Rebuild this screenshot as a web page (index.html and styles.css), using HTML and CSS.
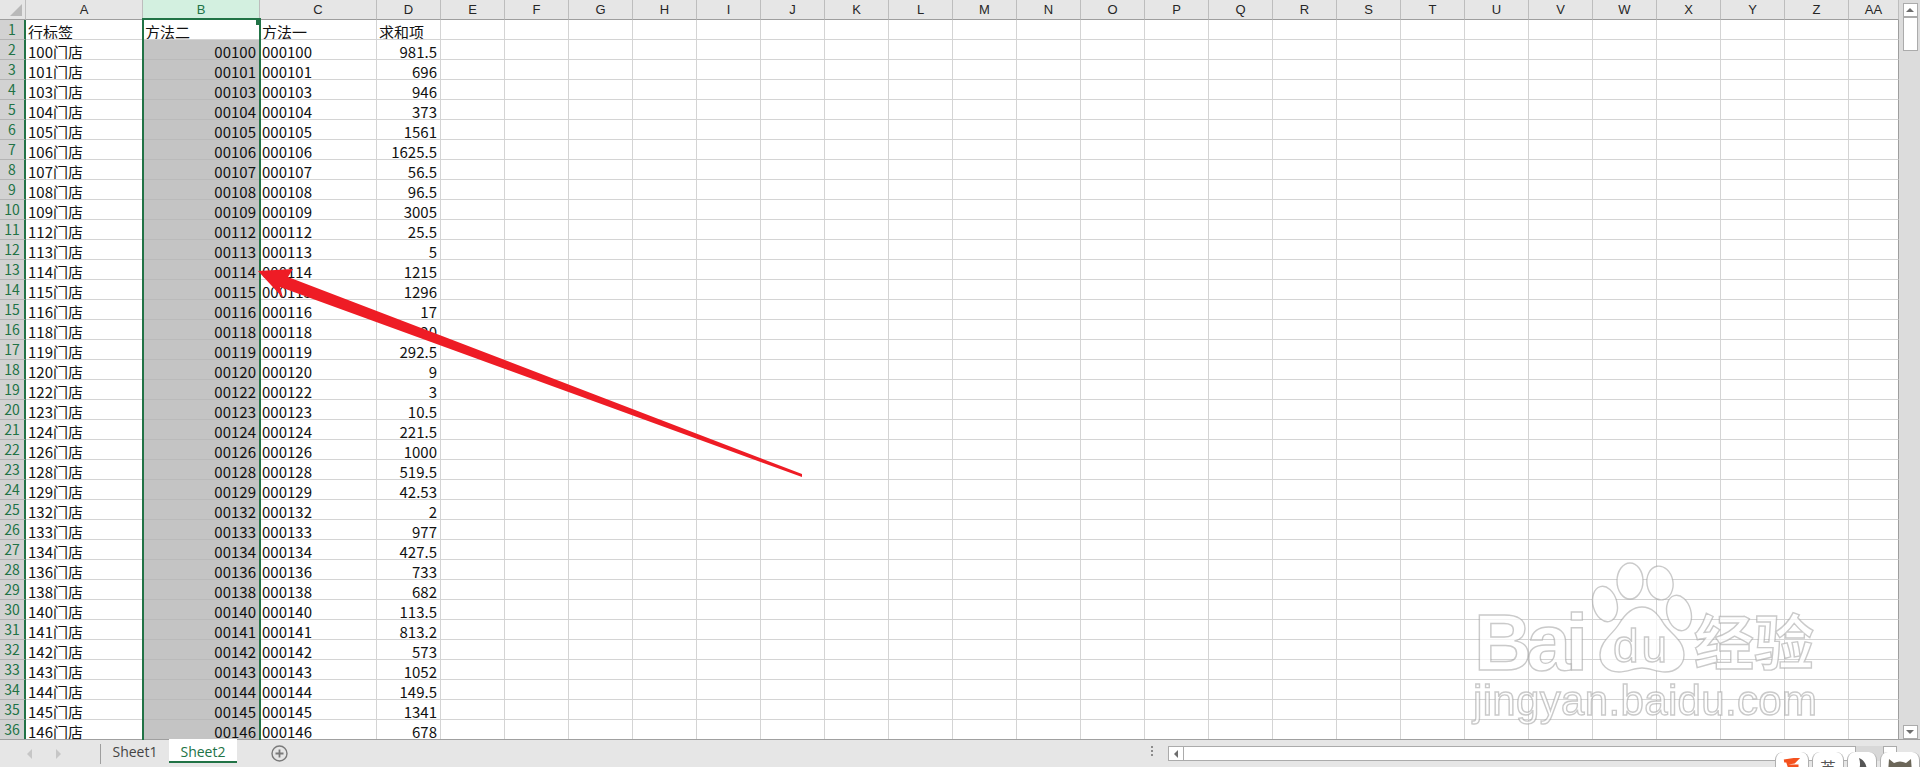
FILE: index.html
```html
<!DOCTYPE html>
<html lang="zh-CN">
<head>
    <meta charset="UTF-8">
    <title>Sheet2 - Excel</title>
    <link rel="stylesheet" href="styles.css">
</head>
<body>
    <div class="workbook">
        <div class="sheet-area">
            <table class="sheet">
                <tr class="col-heads">
                    <th class="corner"></th>
                    <th class="wide">A</th><th class="wide col-on">B</th><th class="wide">C</th><th class="std">D</th>
                    <th class="std">E</th><th class="std">F</th><th class="std">G</th><th class="std">H</th><th class="std">I</th>
                    <th class="std">J</th><th class="std">K</th><th class="std">L</th><th class="std">M</th><th class="std">N</th>
                    <th class="std">O</th><th class="std">P</th><th class="std">Q</th><th class="std">R</th><th class="std">S</th>
                    <th class="std">T</th><th class="std">U</th><th class="std">V</th><th class="std">W</th><th class="std">X</th>
                    <th class="std">Y</th><th class="std">Z</th><th class="last">AA</th>
                </tr>
                <tr><th>1</th><td>行标签</td><td>方法二</td><td>方法一</td><td>求和项</td><td class="rest" colspan="23"></td></tr>
                <tr><th>2</th><td>100门店</td><td class="sel">00100</td><td>000100</td><td class="num">981.5</td><td class="rest" colspan="23"></td></tr>
                <tr><th>3</th><td>101门店</td><td class="sel">00101</td><td>000101</td><td class="num">696</td><td class="rest" colspan="23"></td></tr>
                <tr><th>4</th><td>103门店</td><td class="sel">00103</td><td>000103</td><td class="num">946</td><td class="rest" colspan="23"></td></tr>
                <tr><th>5</th><td>104门店</td><td class="sel">00104</td><td>000104</td><td class="num">373</td><td class="rest" colspan="23"></td></tr>
                <tr><th>6</th><td>105门店</td><td class="sel">00105</td><td>000105</td><td class="num">1561</td><td class="rest" colspan="23"></td></tr>
                <tr><th>7</th><td>106门店</td><td class="sel">00106</td><td>000106</td><td class="num">1625.5</td><td class="rest" colspan="23"></td></tr>
                <tr><th>8</th><td>107门店</td><td class="sel">00107</td><td>000107</td><td class="num">56.5</td><td class="rest" colspan="23"></td></tr>
                <tr><th>9</th><td>108门店</td><td class="sel">00108</td><td>000108</td><td class="num">96.5</td><td class="rest" colspan="23"></td></tr>
                <tr><th>10</th><td>109门店</td><td class="sel">00109</td><td>000109</td><td class="num">3005</td><td class="rest" colspan="23"></td></tr>
                <tr><th>11</th><td>112门店</td><td class="sel">00112</td><td>000112</td><td class="num">25.5</td><td class="rest" colspan="23"></td></tr>
                <tr><th>12</th><td>113门店</td><td class="sel">00113</td><td>000113</td><td class="num">5</td><td class="rest" colspan="23"></td></tr>
                <tr><th>13</th><td>114门店</td><td class="sel">00114</td><td>000114</td><td class="num">1215</td><td class="rest" colspan="23"></td></tr>
                <tr><th>14</th><td>115门店</td><td class="sel">00115</td><td>000115</td><td class="num">1296</td><td class="rest" colspan="23"></td></tr>
                <tr><th>15</th><td>116门店</td><td class="sel">00116</td><td>000116</td><td class="num">17</td><td class="rest" colspan="23"></td></tr>
                <tr><th>16</th><td>118门店</td><td class="sel">00118</td><td>000118</td><td class="num">20</td><td class="rest" colspan="23"></td></tr>
                <tr><th>17</th><td>119门店</td><td class="sel">00119</td><td>000119</td><td class="num">292.5</td><td class="rest" colspan="23"></td></tr>
                <tr><th>18</th><td>120门店</td><td class="sel">00120</td><td>000120</td><td class="num">9</td><td class="rest" colspan="23"></td></tr>
                <tr><th>19</th><td>122门店</td><td class="sel">00122</td><td>000122</td><td class="num">3</td><td class="rest" colspan="23"></td></tr>
                <tr><th>20</th><td>123门店</td><td class="sel">00123</td><td>000123</td><td class="num">10.5</td><td class="rest" colspan="23"></td></tr>
                <tr><th>21</th><td>124门店</td><td class="sel">00124</td><td>000124</td><td class="num">221.5</td><td class="rest" colspan="23"></td></tr>
                <tr><th>22</th><td>126门店</td><td class="sel">00126</td><td>000126</td><td class="num">1000</td><td class="rest" colspan="23"></td></tr>
                <tr><th>23</th><td>128门店</td><td class="sel">00128</td><td>000128</td><td class="num">519.5</td><td class="rest" colspan="23"></td></tr>
                <tr><th>24</th><td>129门店</td><td class="sel">00129</td><td>000129</td><td class="num">42.53</td><td class="rest" colspan="23"></td></tr>
                <tr><th>25</th><td>132门店</td><td class="sel">00132</td><td>000132</td><td class="num">2</td><td class="rest" colspan="23"></td></tr>
                <tr><th>26</th><td>133门店</td><td class="sel">00133</td><td>000133</td><td class="num">977</td><td class="rest" colspan="23"></td></tr>
                <tr><th>27</th><td>134门店</td><td class="sel">00134</td><td>000134</td><td class="num">427.5</td><td class="rest" colspan="23"></td></tr>
                <tr><th>28</th><td>136门店</td><td class="sel">00136</td><td>000136</td><td class="num">733</td><td class="rest" colspan="23"></td></tr>
                <tr><th>29</th><td>138门店</td><td class="sel">00138</td><td>000138</td><td class="num">682</td><td class="rest" colspan="23"></td></tr>
                <tr><th>30</th><td>140门店</td><td class="sel">00140</td><td>000140</td><td class="num">113.5</td><td class="rest" colspan="23"></td></tr>
                <tr><th>31</th><td>141门店</td><td class="sel">00141</td><td>000141</td><td class="num">813.2</td><td class="rest" colspan="23"></td></tr>
                <tr><th>32</th><td>142门店</td><td class="sel">00142</td><td>000142</td><td class="num">573</td><td class="rest" colspan="23"></td></tr>
                <tr><th>33</th><td>143门店</td><td class="sel">00143</td><td>000143</td><td class="num">1052</td><td class="rest" colspan="23"></td></tr>
                <tr><th>34</th><td>144门店</td><td class="sel">00144</td><td>000144</td><td class="num">149.5</td><td class="rest" colspan="23"></td></tr>
                <tr><th>35</th><td>145门店</td><td class="sel">00145</td><td>000145</td><td class="num">1341</td><td class="rest" colspan="23"></td></tr>
                <tr><th>36</th><td>146门店</td><td class="sel">00146</td><td>000146</td><td class="num">678</td><td class="rest" colspan="23"></td></tr>
            </table>
            <div class="vscroll">
                <div class="sb-btn"><span class="tri-up"></span></div>
                <div class="sb-thumb"></div>
                <div class="sb-fill"></div>
                <div class="sb-btn"><span class="tri-down"></span></div>
            </div>
        </div>

        <div class="tabbar">
            <div class="tab-nav">
                <span class="tri-left"></span>
                <span class="tri-right"></span>
            </div>
            <div class="tab">Sheet1</div>
            <div class="tab tab-on">Sheet2</div>
            <svg class="add-sheet" width="17" height="17" viewBox="0 0 17 17">
                <circle cx="8.5" cy="8.5" r="7.5" fill="none" stroke="#7a7a7a" stroke-width="1.4"/>
                <path d="M8.5 4.5v8M4.5 8.5h8" stroke="#7a7a7a" stroke-width="1.8"/>
            </svg>
            <div class="split-dots"></div>
            <div class="hscroll">
                <div class="hs-btn"><span class="tri-left dark"></span></div>
                <div class="hs-thumb"></div>
                <div class="hs-btn hs-end"></div>
            </div>
        </div>
    </div>

    <!-- selected column B -->
    <div class="selection"><span class="handle"></span></div>

    <!-- annotation arrow and watermark, drawn over the sheet -->
    <svg class="overlay" width="1920" height="767" viewBox="0 0 1920 767">
        <g class="mark">
            <ellipse cx="1630" cy="581" rx="13" ry="18"/>
            <ellipse cx="1660" cy="583" rx="13" ry="17" transform="rotate(-10 1660 583)"/>
            <ellipse cx="1605" cy="604" rx="12" ry="18" transform="rotate(-15 1605 604)"/>
            <ellipse cx="1679" cy="613" rx="12" ry="18" transform="rotate(-15 1679 613)"/>
            <path d="M1642 607c10 0 16 7 22 17 6 9 20 16 20 31 0 11-9 17-19 17-9 0-15-4-23-4s-14 4-23 4c-11 0-19-7-19-17 0-14 13-21 19-31 6-10 13-17 23-17z"/>
            <text class="mark-big" x="1474" y="670" textLength="114">Bai</text>
            <text class="mark-du" x="1613" y="662" textLength="54">du</text>
            <text class="mark-cn" x="1694" y="665" textLength="120">经验</text>
            <text class="mark-url" x="1473" y="715" textLength="344">jingyan.baidu.com</text>
        </g>
        <polygon class="arrow" points="258,271 293,269 288,277 802,474 802,477 280,287 283,298"/>
    </svg>

    <!-- floating input method widgets, cut off by the window edge -->
    <div class="ime">
        <div class="ime-item">
            <svg width="18" height="15" viewBox="0 0 18 15"><path d="M1 3l13-2-3 3-6 1 1 3h8v6" fill="none" stroke="#f4511e" stroke-width="3"/></svg>
        </div>
        <div class="ime-item ime-text">英</div>
        <div class="ime-item">
            <svg width="14" height="15" viewBox="0 0 14 15"><path d="M4 0c5 2 8 6 8 15H2c3-4 4-9 2-15z" fill="#555"/></svg>
        </div>
        <div class="ime-item">
            <svg width="24" height="15" viewBox="0 0 24 15"><path d="M1 1l5 4c4-2 8-2 12 0l5-4 1 14H0z" fill="#6b6658"/></svg>
        </div>
    </div>
</body>
</html>
```

FILE: styles.css
```css
* {
    box-sizing: border-box;
    margin: 0;
    padding: 0;
}
html, body {
    width: 1920px;
    height: 767px;
    overflow: hidden;
    background: #E6E6E6;
}
body {
    position: relative;
    font-family: "Liberation Sans Narrow", "Noto Sans CJK SC", sans-serif;
}
.workbook {
    display: flex;
    flex-direction: column;
    height: 767px;
}
.sheet-area {
    display: flex;
    height: 740px;
}

/* grid */
.sheet {
    width: 1899px;
    height: 740px;
    border-collapse: separate;
    border-spacing: 0;
    table-layout: fixed;
    background: #FFF;
}
.sheet th, .sheet td {
    height: 20px;
    overflow: hidden;
    white-space: nowrap;
}
.sheet td {
    padding: 0 3px 0 2px;
    font-size: 15px;
    line-height: 15px;
    color: #111;
    vertical-align: bottom;
    border-right: 1px solid #D4D4D4;
    border-bottom: 1px solid #D4D4D4;
}
.sheet tr > th:first-child {
    background: #D2D2D2;
    color: #217346;
    font-size: 14px;
    line-height: 15px;
    font-weight: 400;
    border-right: 2px solid #217346;
    border-bottom: 1px solid #B4B4B4;
}
.col-heads th {
    background: #E6E6E6;
    color: #262626;
    font-family: "Liberation Sans", sans-serif;
    font-size: 13px;
    line-height: 15px;
    font-weight: 400;
    border-right: 1px solid #BDBDBD;
    border-bottom: 1px solid #9E9E9E;
}
.sheet .col-heads .corner {
    position: relative;
    width: 26px;
    background: #E6E6E6;
    border-right: 1px solid #BDBDBD;
    border-bottom: 1px solid #9E9E9E;
}
.corner::after {
    content: "";
    position: absolute;
    left: 10px;
    top: 4px;
    border-left: 12px solid transparent;
    border-bottom: 12px solid #B9B9B9;
}
.wide { width: 117px; }
.std { width: 64px; }
.last { width: 50px; }
.col-heads .col-on {
    background: #D3F0E0;
    color: #217346;
}
.sheet .num, .sheet .sel {
    text-align: right;
}
.sheet .sel {
    background: #C4C4C4;
    border-right-color: #BABABA;
    border-bottom-color: #BABABA;
}
.sheet .rest {
    padding: 0;
    border-right: 1px solid #9E9E9E;
    background: repeating-linear-gradient(to right, transparent 0, transparent 63px, #D4D4D4 63px, #D4D4D4 64px);
}
.selection {
    position: absolute;
    left: 142px;
    top: 18px;
    width: 119px;
    height: 722px;
    border: 2px solid #217346;
    border-bottom: none;
}
.handle {
    position: absolute;
    right: -2px;
    top: 0;
    width: 5px;
    height: 5px;
    background: #217346;
}

/* scrollbars */
.vscroll {
    display: flex;
    flex-direction: column;
    align-items: center;
    flex-grow: 1;
    padding: 3px 0 1px 1px;
    background: #DCDCDC;
}
.sb-btn {
    display: flex;
    align-items: center;
    justify-content: center;
    width: 15px;
    height: 14px;
    background: #FFF;
    border: 1px solid #ABABAB;
}
.sb-thumb {
    width: 15px;
    height: 34px;
    background: #FFF;
    border: 1px solid #ABABAB;
}
.sb-fill {
    flex-grow: 1;
}
.tri-up, .tri-down {
    width: 0;
    height: 0;
    border-left: 4px solid transparent;
    border-right: 4px solid transparent;
}
.tri-up { border-bottom: 4px solid #6E6E6E; }
.tri-down { border-top: 4px solid #6E6E6E; }
.tri-left, .tri-right {
    width: 0;
    height: 0;
    border-top: 5px solid transparent;
    border-bottom: 5px solid transparent;
}
.tri-left { border-right: 5px solid #C6C6C6; }
.tri-right { border-left: 5px solid #C6C6C6; }
.tri-left.dark {
    border-top-width: 4px;
    border-bottom-width: 4px;
    border-right: 4px solid #6E6E6E;
}

/* bottom bar */
.tabbar {
    display: flex;
    align-items: flex-start;
    height: 28px;
    background: #E6E6E6;
    border-top: 1px solid #A0A0A0;
    margin-top: -1px;
    position: relative;
}
.tab-nav {
    display: flex;
    align-items: center;
    gap: 24px;
    width: 101px;
    height: 20px;
    margin-top: 4px;
    padding-left: 27px;
    border-right: 1px solid #9E9E9E;
}
.tab {
    width: 68px;
    height: 24px;
    margin-top: -1px;
    padding-top: 3px;
    text-align: center;
    font-family: "Open Sans", sans-serif;
    font-size: 14px;
    color: #444;
}
.tab-on {
    background: #FFF;
    color: #217346;
    border-bottom: 2px solid #217346;
}
.add-sheet {
    margin: 5px 0 0 34px;
}
.split-dots {
    width: 2px;
    height: 11px;
    margin: 6px 0 0 863px;
    background: repeating-linear-gradient(to bottom, #8C8C8C 0, #8C8C8C 2px, transparent 2px, transparent 4px);
}
.hscroll {
    display: flex;
    width: 729px;
    height: 15px;
    margin: 6px 0 0 15px;
    background: #D8D8D8;
}
.hs-btn {
    display: flex;
    align-items: center;
    justify-content: center;
    width: 16px;
    background: #FFF;
    border: 1px solid #ABABAB;
}
.hs-thumb {
    width: 672px;
    background: #FFF;
    border: 1px solid #ABABAB;
    border-left: none;
}
.hs-end {
    width: 14px;
    margin-left: 27px;
}

/* overlay */
.overlay {
    position: absolute;
    left: 0;
    top: 0;
    pointer-events: none;
}
.arrow {
    fill: #EE1C25;
}
.mark {
    fill: rgba(255, 255, 255, 0.72);
    stroke: rgba(150, 150, 150, 0.5);
    stroke-width: 1.4px;
    filter: blur(0.5px);
}
.mark text {
    font-family: "Liberation Sans", "Noto Sans CJK SC", sans-serif;
}
.mark .mark-big {
    font-size: 80px;
    font-weight: 700;
}
.mark .mark-du {
    font-size: 46px;
}
.mark .mark-cn {
    font-size: 60px;
    font-weight: 700;
}
.mark .mark-url {
    font-size: 42px;
}

/* input method widgets */
.ime {
    position: absolute;
    left: 1775px;
    top: 752px;
    display: flex;
    gap: 3px;
    width: 145px;
    height: 15px;
}
.ime-item {
    display: flex;
    justify-content: center;
    flex-grow: 1;
    height: 30px;
    padding-top: 6px;
    background: #FFF;
    border-left: 1px solid #B0B0B0;
    border-right: 1px solid #B0B0B0;
    border-radius: 8px 8px 0 0;
}
.ime-text {
    font-family: "Noto Sans CJK SC", sans-serif;
    font-size: 16px;
    line-height: 18px;
    color: #555;
}
```
